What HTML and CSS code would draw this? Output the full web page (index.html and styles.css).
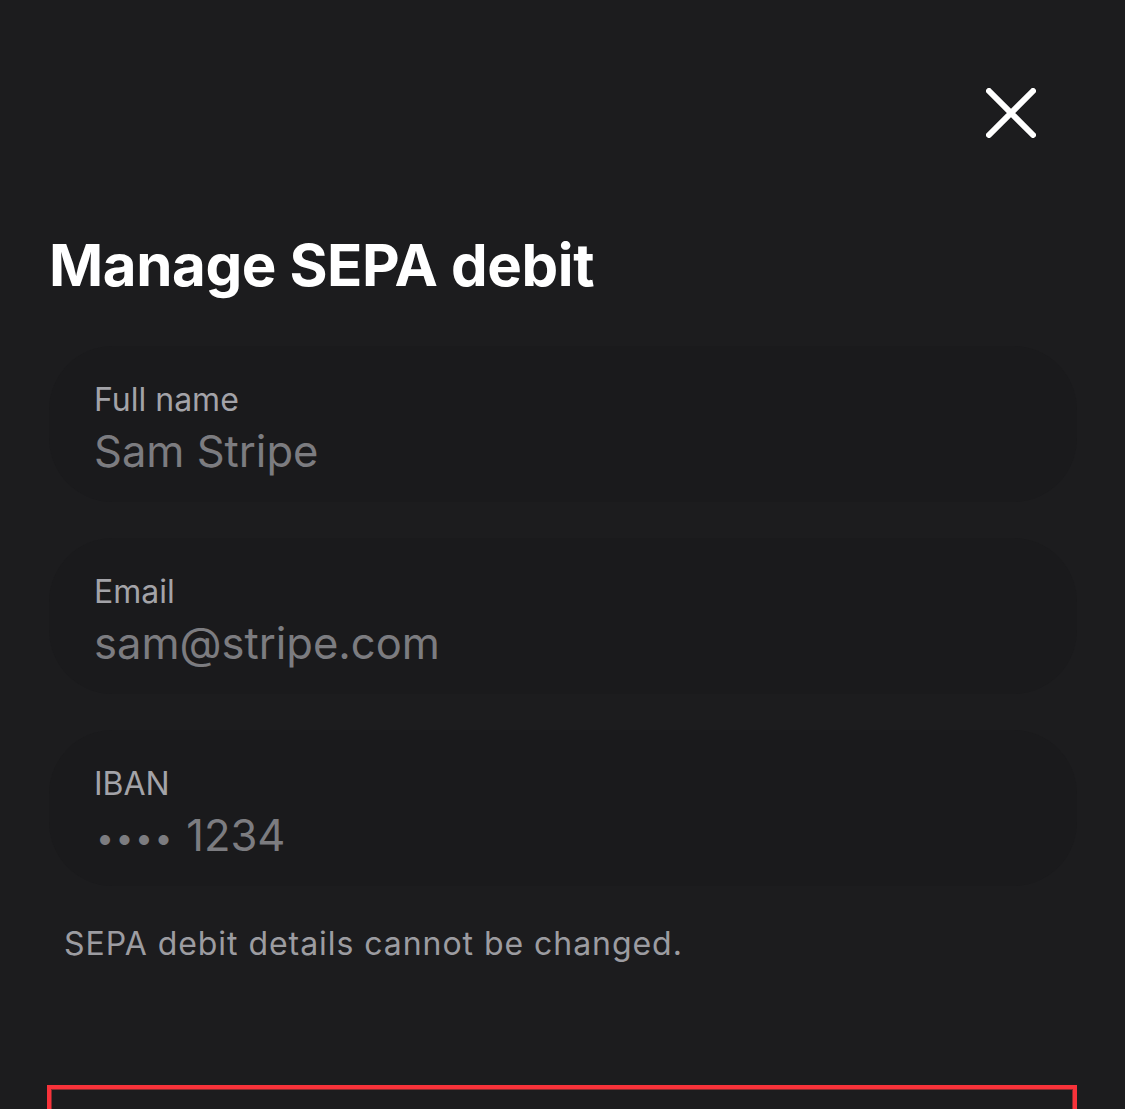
FILE: index.html
```html
<!DOCTYPE html>
<html>
<head>
<meta charset="utf-8">
<link rel="stylesheet" href="styles.css">
</head>
<body>
<div class="sheet">
  <div class="topbar">
    <button class="close" aria-label="Close">
      <svg width="50" height="50" viewBox="0 0 50 50"><path d="M3 3 L47 47 M47 3 L3 47" stroke="#fff" stroke-width="6" stroke-linecap="round" fill="none"/></svg>
    </button>
  </div>
  <h1 class="title">Manage SEPA debit</h1>
  <div class="fields">
    <div class="field">
      <div class="label">Full name</div>
      <div class="value">Sam Stripe</div>
    </div>
    <div class="field">
      <div class="label">Email</div>
      <div class="value">sam@stripe.com</div>
    </div>
    <div class="field">
      <div class="label">IBAN</div>
      <div class="value"><span class="dots">••••</span> 1234</div>
    </div>
  </div>
  <p class="note">SEPA debit details cannot be changed.</p>
  <div class="danger"></div>
</div>
</body>
</html>
```

FILE: styles.css
```css
html, body {
  margin: 0;
  padding: 0;
  background: #1c1c1e;
  height: 100%;
  overflow: hidden;
}
body {
  font-family: Inter, "Noto Sans", sans-serif;
  color: #fff;
}
.sheet {
  padding: 0 48px 0 49px;
}
.topbar {
  display: flex;
  justify-content: flex-end;
  padding-top: 88px;
  padding-right: 41px;
}
.close {
  background: none;
  border: 0;
  padding: 0;
  width: 50px;
  height: 50px;
  display: block;
}
.close svg { display: block; }
.title {
  margin: 92px 0 0 0;
  font-size: 58.2px;
  font-weight: 700;
  line-height: 70px;
  letter-spacing: -0.4px;
}
.fields {
  margin-top: 46px;
  display: flex;
  flex-direction: column;
  gap: 36px;
}
.field {
  background: #1a1a1c;
  border-radius: 64px;
  height: 156px;
  box-sizing: border-box;
  padding: 35px 45px 0;
}
.label {
  font-size: 32px;
  line-height: 38px;
  color: #a3a3a8;
}
.value {
  margin-top: 6px;
  font-size: 43.5px;
  line-height: 52px;
  color: #7c7c80;
}
.dots {
  font-size: 32px;
  letter-spacing: 1.5px;
  margin-left: 2px;
  vertical-align: 2px;
}
.note {
  margin: 38px 0 0 15px;
  font-size: 32px;
  line-height: 40px;
  color: #9c9ca1;
  letter-spacing: 0.95px;
}
.danger {
  margin: 121px 0 0 -2px;
  height: 60px;
  border: 4px solid #f8323a;
  outline: 1px solid #8a2a2d;
  outline-offset: -5px;
}
```
